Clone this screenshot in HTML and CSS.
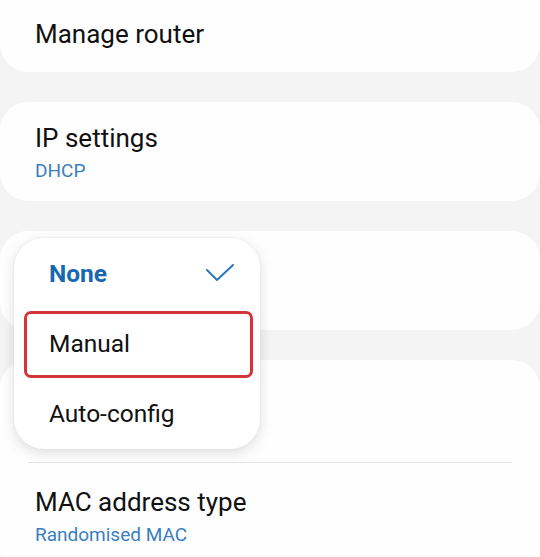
FILE: index.html
```html
<!DOCTYPE html>
<html lang="en">
<head>
<meta charset="utf-8">
<title>Wi-Fi settings</title>
<link rel="stylesheet" href="styles.css">
</head>
<body>
<main class="list">
  <section class="card card-top">
    <div class="row row-single">
      <div class="title">Manage router</div>
    </div>
  </section>
  <section class="card">
    <div class="row">
      <div class="title">IP settings</div>
      <div class="sub">DHCP</div>
    </div>
  </section>
  <section class="card">
    <div class="row-hidden row-proxy"></div>
  </section>
  <section class="card">
    <div class="row-hidden row-metered"></div>
    <div class="divider"></div>
    <div class="row row-mac">
      <div class="title">MAC address type</div>
      <div class="sub">Randomised MAC</div>
    </div>
  </section>
</main>
<div class="menu">
  <div class="item selected">
    <span>None</span>
    <svg class="check" width="28" height="18" viewBox="0 0 28 18"><polyline points="1,6 11,16 27,1" fill="none" stroke="#2a78bd" stroke-width="2" stroke-linecap="round" stroke-linejoin="round"/></svg>
  </div>
  <div class="item marked"><span>Manual</span></div>
  <div class="item"><span>Auto-config</span></div>
</div>
</body>
</html>
```
FILE: styles.css
```css
html, body {
  margin: 0;
  padding: 0;
}
body {
  background: #f4f4f4;
  font-family: Roboto, "Noto Sans", sans-serif;
  color: #111111;
  width: 540px;
  height: 557px;
  overflow: hidden;
}
.list {
  display: flex;
  flex-direction: column;
  gap: 30px;
}
.card {
  background: #fefefe;
  border-radius: 28px;
}
.card-top {
  margin-top: -28px;
}
.row {
  padding: 21px 35px 18px;
  display: flex;
  flex-direction: column;
}
.row-single {
  padding: 47px 35px 23px;
}
.row-proxy {
  height: 99px;
}
.row-metered {
  height: 102px;
}
.row-mac {
  padding: 24px 35px 30px;
}
.title {
  font-size: 26px;
  line-height: 30px;
  height: 30px;
}
.sub {
  margin-top: 6px;
  font-size: 19px;
  line-height: 24px;
  color: #3a7ec0;
}
.divider {
  height: 1px;
  background: #e6e6e6;
  margin: 0 28px;
}
.menu {
  position: absolute;
  left: 14px;
  top: 238px;
  width: 246px;
  height: 211px;
  box-sizing: border-box;
  padding-top: 1px;
  background: #ffffff;
  border-radius: 30px;
  box-shadow: 0 4px 14px rgba(0, 0, 0, 0.13), 0 0 3px rgba(0, 0, 0, 0.05);
}
.item {
  position: relative;
  height: 70px;
  display: flex;
  align-items: center;
  justify-content: space-between;
  padding: 0 26px 0 35px;
  font-size: 24.5px;
  line-height: 70px;
  color: #111111;
}
.item.selected {
  font-weight: 700;
  color: #1768b0;
}
.check {
  display: block;
  margin-top: -2px;
}
.item.marked::after {
  content: "";
  position: absolute;
  top: 2px;
  bottom: 1px;
  left: 10px;
  right: 7px;
  border: 3px solid #d2343a;
  border-radius: 7px;
}
```
